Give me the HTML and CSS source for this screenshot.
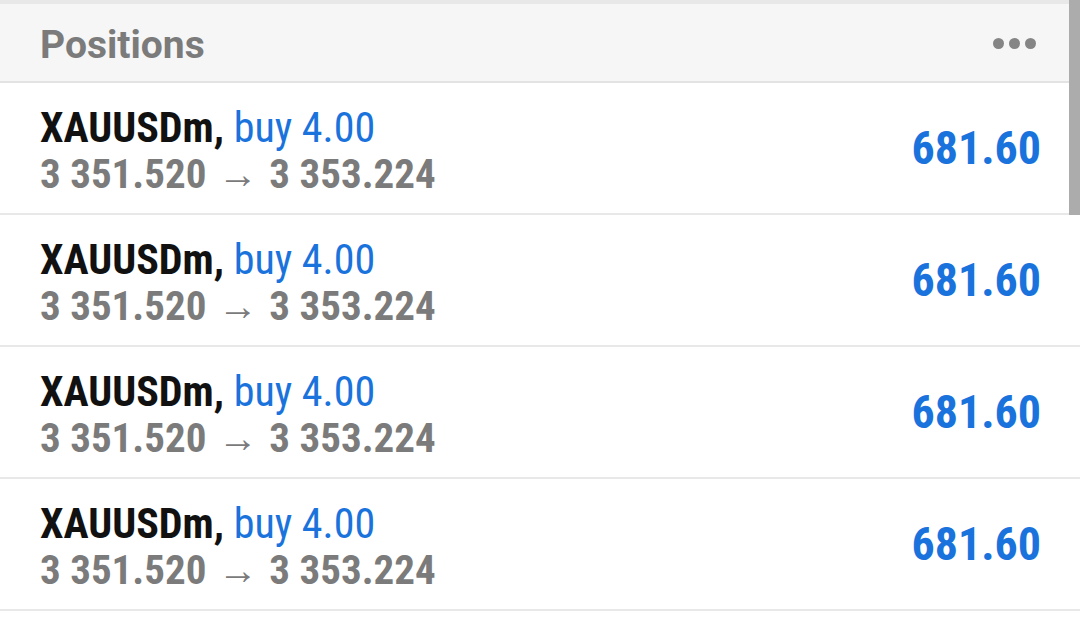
FILE: index.html
```html
<!DOCTYPE html>
<html>
<head>
<meta charset="utf-8">
<link rel="stylesheet" href="styles.css">
</head>
<body>
<div class="screen">
  <div class="header">
    <div class="title">Positions</div>
    <div class="more"><span class="dot"></span><span class="dot"></span><span class="dot"></span></div>
  </div>
  <div class="list">
    <div class="row">
      <div class="info">
        <div class="line1"><span class="sym">XAUUSDm,</span> <span class="side">buy 4.00</span></div>
        <div class="line2">3 351.520 <span class="arrow">→</span> 3 353.224</div>
      </div>
      <div class="profit">681.60</div>
    </div>
    <div class="row">
      <div class="info">
        <div class="line1"><span class="sym">XAUUSDm,</span> <span class="side">buy 4.00</span></div>
        <div class="line2">3 351.520 <span class="arrow">→</span> 3 353.224</div>
      </div>
      <div class="profit">681.60</div>
    </div>
    <div class="row">
      <div class="info">
        <div class="line1"><span class="sym">XAUUSDm,</span> <span class="side">buy 4.00</span></div>
        <div class="line2">3 351.520 <span class="arrow">→</span> 3 353.224</div>
      </div>
      <div class="profit">681.60</div>
    </div>
    <div class="row">
      <div class="info">
        <div class="line1"><span class="sym">XAUUSDm,</span> <span class="side">buy 4.00</span></div>
        <div class="line2">3 351.520 <span class="arrow">→</span> 3 353.224</div>
      </div>
      <div class="profit">681.60</div>
    </div>
  </div>
  <div class="scrollbar"></div>
</div>
</body>
</html>
```
FILE: styles.css
```css
html, body {
  margin: 0;
  padding: 0;
  background: #ffffff;
}
.screen {
  position: relative;
  width: 1080px;
  height: 619px;
  overflow: hidden;
  font-family: Roboto, "Noto Sans", sans-serif;
}
.header {
  height: 77px;
  border-top: 4px solid #e8e8e8;
  border-bottom: 2px solid #e3e3e3;
  background: #f6f6f6;
  display: flex;
  align-items: center;
  justify-content: space-between;
  padding: 0 44px 0 40px;
}
.title {
  font-size: 39px;
  font-weight: 700;
  color: #7b7b7b;
  padding-top: 4px;
}
.more {
  display: flex;
  gap: 5px;
  padding-top: 2px;
}
.dot {
  width: 11px;
  height: 11px;
  border-radius: 50%;
  background: #858585;
}
.row {
  height: 130px;
  border-bottom: 2px solid #e8e8e8;
  display: flex;
  align-items: center;
  justify-content: space-between;
  padding: 0 39px 0 40px;
}
.info {
  display: flex;
  flex-direction: column;
  font-stretch: 80%;
  padding-top: 5px;
}
.line1 {
  font-size: 42px;
  line-height: 47px;
  font-weight: 700;
  color: #111111;
}
.sym {
  font-weight: 700;
}
.side {
  font-weight: 400;
  color: #1a73dc;
}
.line2 {
  font-size: 41px;
  line-height: 47px;
  font-weight: 700;
  color: #7b7b7b;
}
.arrow {
  font-weight: 400;
  font-size: 40px;
  margin: 0 2px;
}
.profit {
  font-size: 46px;
  font-weight: 700;
  color: #1a73dc;
  font-stretch: 80%;
}
.scrollbar {
  position: absolute;
  right: 0;
  top: 0;
  width: 11px;
  height: 215px;
  background: #acacac;
}
```
